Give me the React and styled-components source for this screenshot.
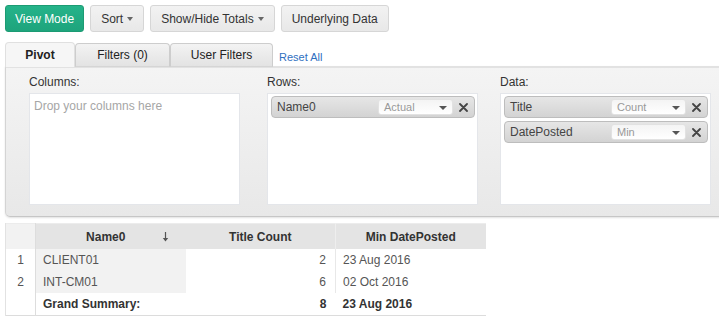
import React from "react";
import styled, { createGlobalStyle } from "styled-components";

const Global = createGlobalStyle`
  html, body { margin: 0; padding: 0; background: #fff; overflow: hidden; }
  body { font-family: "Liberation Sans", Arial, sans-serif; color: #333; }
`;

const Page = styled.div`
  padding: 5px 0 0 5px;
`;

const Toolbar = styled.div`
  display: flex;
  gap: 6px;
  height: 27px;
`;

const Button = styled.button`
  font-family: "Liberation Sans", Arial, sans-serif;
  font-size: 12px;
  height: 27px;
  padding: 0 ${(p) => p.$px || 9}px;
  border-radius: 3px;
  border: 1px solid ${(p) => (p.$primary ? "#1c9b73" : "#d6d6d6")};
  background: ${(p) =>
    p.$primary ? "linear-gradient(#25b38a, #1ea47c)" : "linear-gradient(#f2f2f2, #e8e8e8)"};
  color: ${(p) => (p.$primary ? "#fff" : "#333")};
  display: inline-flex;
  align-items: center;
  gap: 4px;
  cursor: pointer;
`;

const Caret = styled.span`
  width: 0;
  height: 0;
  border-left: ${(p) => p.$half || 3.5}px solid transparent;
  border-right: ${(p) => p.$half || 3.5}px solid transparent;
  border-top: 4px solid ${(p) => p.$color || "#666"};
  display: inline-block;
  margin-top: 1px;
`;

const TabBar = styled.div`
  display: flex;
  align-items: flex-end;
  margin-top: 10px;
  height: 25px;
  position: relative;
  z-index: 1;
`;

const Tab = styled.div`
  width: ${(p) => p.$w}px;
  height: ${(p) => (p.$active ? 25 : 24)}px;
  box-sizing: border-box;
  display: flex;
  align-items: center;
  justify-content: center;
  font-size: 12px;
  font-weight: ${(p) => (p.$active ? "bold" : "normal")};
  color: #222;
  border: 1px solid ${(p) => (p.$active ? "#e0e0e0" : "#cdcdcd")};
  border-bottom: ${(p) => (p.$active ? "none" : "1px solid #d5d5d5")};
  border-radius: 4px 4px 0 0;
  background: ${(p) => (p.$active ? "#f6f6f6" : "linear-gradient(#f3f3f3, #e3e3e3)")};
  padding-bottom: ${(p) => (p.$active ? 1 : 0)}px;
`;

const ResetLink = styled.a`
  font-size: 11px;
  color: #2f6fbf;
  margin-left: 6px;
  align-self: center;
  margin-top: 4px;
  text-decoration: none;
`;

const Panel = styled.div`
  margin-top: -1px;
  margin-right: -10px;
  border-top: 2px solid #e2e2e2;
  border-left: 1px solid #d4d4d4;
  border-bottom: 1px solid #c6c6c6;
  border-bottom-left-radius: 5px;
  background: linear-gradient(#f4f4f4, #e8e8e8);
  box-shadow: 0 1px 2px rgba(0, 0, 0, 0.12);
  padding: 7px 0 10px 23px;
  display: grid;
  grid-template-columns: 238px 233px 211px;
  height: 131px;
`;

const Area = styled.div`
  display: flex;
  flex-direction: column;
`;

const AreaLabel = styled.div`
  font-size: 12px;
  color: #333;
  line-height: 14px;
  margin-bottom: 4px;
`;

const DropBox = styled.div`
  width: 211px;
  height: 112px;
  box-sizing: border-box;
  background: #fff;
  border: 1px solid #e4e6ea;
  padding: 2px 2px 0 2px;
  display: flex;
  flex-direction: column;
  gap: ${(p) => p.$gap || 4}px;
`;

const Placeholder = styled.div`
  font-size: 12px;
  color: #a6a6a6;
  padding: 3px 0 0 2px;
`;

const Chip = styled.div`
  height: 22px;
  box-sizing: border-box;
  margin-left: 1px;
  border: 1px solid #bdbdbd;
  border-radius: 4px;
  background: linear-gradient(#e6e6e6, #d3d3d3);
  display: flex;
  align-items: center;
  padding: 0 6px 0 5px;
  font-size: 12px;
  color: #444;
`;

const ChipName = styled.span`
  flex: 1;
`;

const Select = styled.div`
  width: 75px;
  height: 16px;
  box-sizing: border-box;
  border-radius: 3px;
  background: linear-gradient(#f4f4f4, #fff);
  border: 1px solid #e2e2e2;
  display: flex;
  align-items: center;
  justify-content: space-between;
  padding: 0 5px 0 5px;
  font-size: 11px;
  color: #999;
`;

const Remove = styled.span`
  margin-left: 6px;
  display: inline-flex;
`;

const XIcon = () => (
  <svg width="9" height="9" viewBox="0 0 9 9">
    <path d="M1 1 L8 8 M8 1 L1 8" stroke="#444" strokeWidth="1.8" strokeLinecap="round" />
  </svg>
);

const FieldChip = ({ name, agg }) => (
  <Chip>
    <ChipName>{name}</ChipName>
    <Select>
      <span>{agg}</span>
      <Caret $color="#555" $half={4} />
    </Select>
    <Remove>
      <XIcon />
    </Remove>
  </Chip>
);

const Table = styled.table`
  margin-top: 6px;
  border-collapse: collapse;
  font-size: 12px;
  width: 480px;
  table-layout: fixed;
  border-top: 1px solid #ececec;
  border-bottom: 1px solid #dcdcdc;
`;

const Th = styled.th`
  height: 25px;
  padding: 0;
  font-weight: bold;
  color: #333;
  background: ${(p) => (p.$num ? "#f2f2f2" : "#e4e4e4")};
  border-left: ${(p) => (p.$sep ? "1px solid #eeeeee" : p.$num ? "1px solid #e2e2e2" : "none")};
  border-right: ${(p) => (p.$num ? "1px solid #dddddd" : "none")};
  position: relative;
  text-align: center;
`;

const HeadText = styled.span`
  margin-right: ${(p) => p.$shift || 0}px;
`;

const SortArrow = styled.span`
  position: absolute;
  right: 17px;
  top: 8px;
  display: inline-flex;
`;

const Td = styled.td`
  height: 22px;
  padding: 0 ${(p) => (p.$right ? 9 : 0)}px 0 ${(p) => (p.$num ? 0 : p.$right ? 0 : 7)}px;
  color: ${(p) => (p.$bold ? "#333" : "#555")};
  font-weight: ${(p) => (p.$bold ? "bold" : "normal")};
  background: ${(p) => (p.$shade ? "#f2f2f2" : "#fff")};
  text-align: ${(p) => (p.$right ? "right" : p.$num ? "center" : "left")};
  border-left: ${(p) => (p.$sep ? "1px solid #e8e8e8" : p.$num ? "1px solid #e2e2e2" : "none")};
  border-right: ${(p) => (p.$num ? "1px solid #dddddd" : "none")};
`;

const NumCol = styled.col`
  width: 30px;
`;

const DataCol = styled.col`
  width: 150px;
`;

const rows = [
  { n: 1, name: "CLIENT01", count: 2, date: "23 Aug 2016" },
  { n: 2, name: "INT-CM01", count: 6, date: "02 Oct 2016" },
];

export default function App() {
  return (
    <Page>
      <Global />
      <Toolbar>
        <Button $primary>View Mode</Button>
        <Button $px={10}>
          Sort <Caret />
        </Button>
        <Button $px={10}>
          Show/Hide Totals <Caret />
        </Button>
        <Button $px={10}>Underlying Data</Button>
      </Toolbar>
      <TabBar>
        <Tab $active $w={70}>Pivot</Tab>
        <Tab $w={95}>Filters (0)</Tab>
        <Tab $w={103}>User Filters</Tab>
        <ResetLink href="#">Reset All</ResetLink>
      </TabBar>
      <Panel>
        <Area>
          <AreaLabel>Columns:</AreaLabel>
          <DropBox>
            <Placeholder>Drop your columns here</Placeholder>
          </DropBox>
        </Area>
        <Area>
          <AreaLabel>Rows:</AreaLabel>
          <DropBox>
            <FieldChip name="Name0" agg="Actual" />
          </DropBox>
        </Area>
        <Area>
          <AreaLabel>Data:</AreaLabel>
          <DropBox $gap={3}>
            <FieldChip name="Title" agg="Count" />
            <FieldChip name="DatePosted" agg="Min" />
          </DropBox>
        </Area>
      </Panel>
      <Table>
        <colgroup>
          <NumCol />
          <DataCol />
          <DataCol />
          <DataCol />
        </colgroup>
        <thead>
          <tr>
            <Th $num />
            <Th>
              <HeadText $shift={10}>Name0</HeadText>
              <SortArrow>
                <svg width="7" height="10" viewBox="0 0 7 10">
                  <path d="M3.5 0 V7" stroke="#555" strokeWidth="1.2" />
                  <path d="M0.8 6 L3.5 9.5 L6.2 6 Z" fill="#555" />
                </svg>
              </SortArrow>
            </Th>
            <Th>Title Count</Th>
            <Th $sep>Min DatePosted</Th>
          </tr>
        </thead>
        <tbody>
          {rows.map((r) => (
            <tr key={r.n}>
              <Td $num>{r.n}</Td>
              <Td $shade>{r.name}</Td>
              <Td $right>{r.count}</Td>
              <Td $sep>{r.date}</Td>
            </tr>
          ))}
          <tr>
            <Td $num />
            <Td $bold>Grand Summary:</Td>
            <Td $bold $right>8</Td>
            <Td $bold>23 Aug 2016</Td>
          </tr>
        </tbody>
      </Table>
    </Page>
  );
}
